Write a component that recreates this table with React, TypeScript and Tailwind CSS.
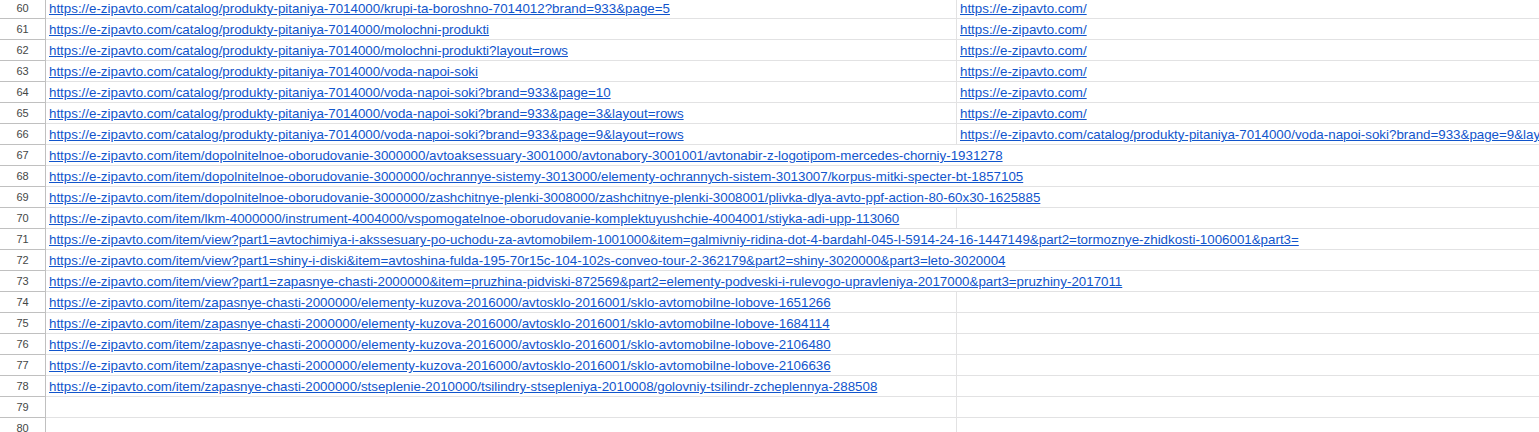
const base = 'https://e-zipavto.com/'

interface Row {
  n: number
  a?: string
  b?: string
}

const rows: Row[] = [
  { n: 60, a: base + 'catalog/produkty-pitaniya-7014000/krupi-ta-boroshno-7014012?brand=933&page=5', b: base },
  { n: 61, a: base + 'catalog/produkty-pitaniya-7014000/molochni-produkti', b: base },
  { n: 62, a: base + 'catalog/produkty-pitaniya-7014000/molochni-produkti?layout=rows', b: base },
  { n: 63, a: base + 'catalog/produkty-pitaniya-7014000/voda-napoi-soki', b: base },
  { n: 64, a: base + 'catalog/produkty-pitaniya-7014000/voda-napoi-soki?brand=933&page=10', b: base },
  { n: 65, a: base + 'catalog/produkty-pitaniya-7014000/voda-napoi-soki?brand=933&page=3&layout=rows', b: base },
  {
    n: 66,
    a: base + 'catalog/produkty-pitaniya-7014000/voda-napoi-soki?brand=933&page=9&layout=rows',
    b: base + 'catalog/produkty-pitaniya-7014000/voda-napoi-soki?brand=933&page=9&layout=rows',
  },
  { n: 67, a: base + 'item/dopolnitelnoe-oborudovanie-3000000/avtoaksessuary-3001000/avtonabory-3001001/avtonabir-z-logotipom-mercedes-chorniy-1931278' },
  { n: 68, a: base + 'item/dopolnitelnoe-oborudovanie-3000000/ochrannye-sistemy-3013000/elementy-ochrannych-sistem-3013007/korpus-mitki-specter-bt-1857105' },
  { n: 69, a: base + 'item/dopolnitelnoe-oborudovanie-3000000/zashchitnye-plenki-3008000/zashchitnye-plenki-3008001/plivka-dlya-avto-ppf-action-80-60x30-1625885' },
  { n: 70, a: base + 'item/lkm-4000000/instrument-4004000/vspomogatelnoe-oborudovanie-komplektuyushchie-4004001/stiyka-adi-upp-113060' },
  { n: 71, a: base + 'item/view?part1=avtochimiya-i-akssesuary-po-uchodu-za-avtomobilem-1001000&item=galmivniy-ridina-dot-4-bardahl-045-l-5914-24-16-1447149&part2=tormoznye-zhidkosti-1006001&part3=' },
  { n: 72, a: base + 'item/view?part1=shiny-i-diski&item=avtoshina-fulda-195-70r15c-104-102s-conveo-tour-2-362179&part2=shiny-3020000&part3=leto-3020004' },
  { n: 73, a: base + 'item/view?part1=zapasnye-chasti-2000000&item=pruzhina-pidviski-872569&part2=elementy-podveski-i-rulevogo-upravleniya-2017000&part3=pruzhiny-2017011' },
  { n: 74, a: base + 'item/zapasnye-chasti-2000000/elementy-kuzova-2016000/avtosklo-2016001/sklo-avtomobilne-lobove-1651266' },
  { n: 75, a: base + 'item/zapasnye-chasti-2000000/elementy-kuzova-2016000/avtosklo-2016001/sklo-avtomobilne-lobove-1684114' },
  { n: 76, a: base + 'item/zapasnye-chasti-2000000/elementy-kuzova-2016000/avtosklo-2016001/sklo-avtomobilne-lobove-2106480' },
  { n: 77, a: base + 'item/zapasnye-chasti-2000000/elementy-kuzova-2016000/avtosklo-2016001/sklo-avtomobilne-lobove-2106636' },
  { n: 78, a: base + 'item/zapasnye-chasti-2000000/stseplenie-2010000/tsilindry-stsepleniya-2010008/golovniy-tsilindr-zcheplennya-288508' },
  { n: 79 },
  { n: 80 },
]

// rows whose text spills over into column B
const spills = [67, 68, 69, 71, 72, 73]

export default function App() {
  return (
    <div className="w-full h-[432px] overflow-hidden bg-white font-['Liberation_Sans',Arial,sans-serif]">
      <div className="-mt-[2px] flex flex-col">
        {rows.map((r) => {
          const spill = spills.includes(r.n)
          return (
            <div key={r.n} className="flex h-[21px]">
              <div className="w-[46px] shrink-0 border-r border-b border-[#c0c0c0] flex items-center justify-center text-[11px] text-[#444746]">
                {r.n}
              </div>
              <div
                className={`relative w-[911px] shrink-0 border-b border-[#e2e2e3] ${spill ? '' : 'border-r'} flex items-end pb-[1px] pl-[3px] z-10`}
              >
                {r.a && (
                  <a className="text-[13.33px] leading-[16px] text-[#1155cc] underline whitespace-nowrap bg-white" href="#">
                    {r.a}
                  </a>
                )}
              </div>
              <div className="flex-1 min-w-0 overflow-hidden border-b border-[#e2e2e3] flex items-end pb-[1px] pl-[3px]">
                {r.b && (
                  <a className="text-[13.33px] leading-[16px] text-[#1155cc] underline whitespace-nowrap" href="#">
                    {r.b}
                  </a>
                )}
              </div>
            </div>
          )
        })}
      </div>
    </div>
  )
}
